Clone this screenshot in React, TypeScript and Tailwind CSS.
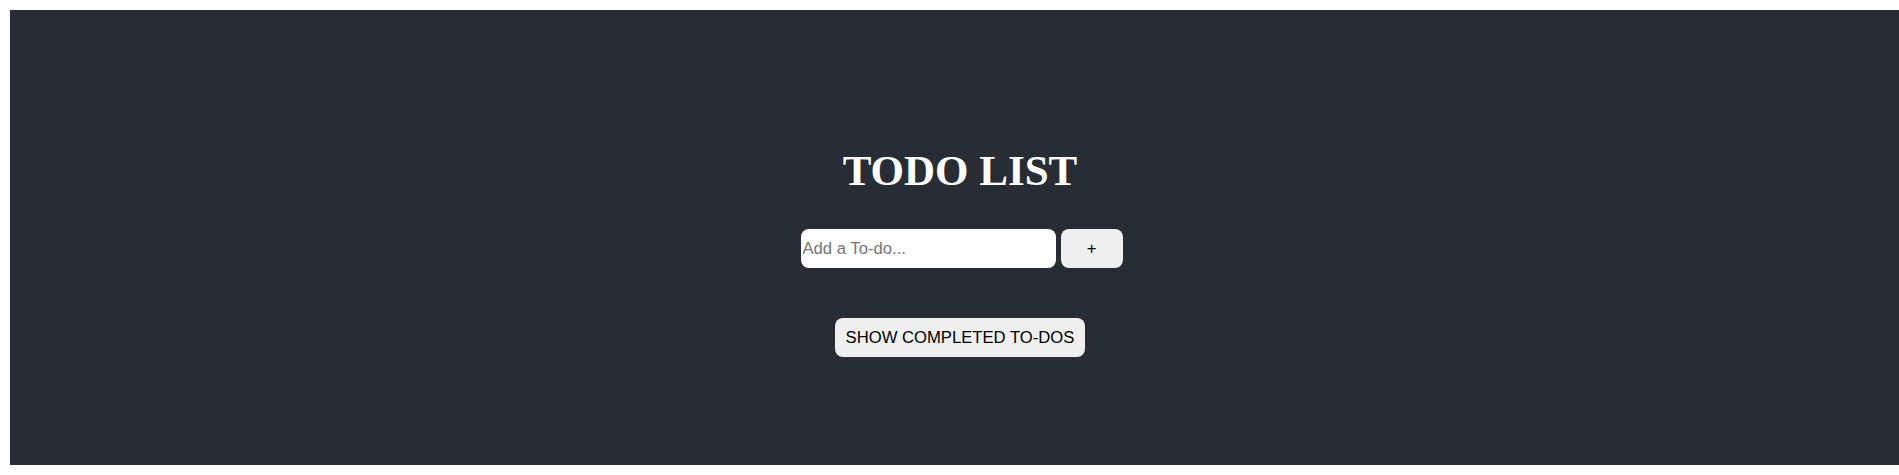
import React, { useState } from "react";

export default function App() {
  const [todo, setTodo] = useState("");
  const [showDone, setShowDone] = useState(false);

  return (
    <div className="bg-white min-h-screen pt-[10px] pl-[10px]">
      <div className="bg-[#282c34] h-[455px] flex flex-col items-center pl-[11px] pt-[139px]">
        {/* Title */}
        <h1 className="text-white font-bold text-[43px] leading-none h-[43px] [font-family:'Liberation_Serif','Times_New_Roman',serif]">
          TODO LIST
        </h1>

        {/* Add form */}
        <div className="flex items-center gap-[5px] mt-[37px] pl-[3px] [font-family:'Liberation_Sans',Arial,sans-serif]">
          <input
            value={todo}
            onChange={(e) => setTodo(e.target.value)}
            placeholder="Add a To-do..."
            className="w-[255px] h-[39px] bg-white rounded-[8px] px-[2px] text-[16.67px] text-black placeholder:text-[#757575] outline-none"
          />
          <button className="w-[62px] h-[39px] bg-[#efefef] rounded-[8px] text-[16.67px] text-black">
            +
          </button>
        </div>

        {/* Toggle completed */}
        <button
          onClick={() => setShowDone(!showDone)}
          className="mt-[50px] w-[250px] h-[39px] bg-[#efefef] rounded-[8px] text-[16.67px] text-black [font-family:'Liberation_Sans',Arial,sans-serif]"
        >
          SHOW COMPLETED TO-DOS
        </button>
      </div>
    </div>
  );
}
